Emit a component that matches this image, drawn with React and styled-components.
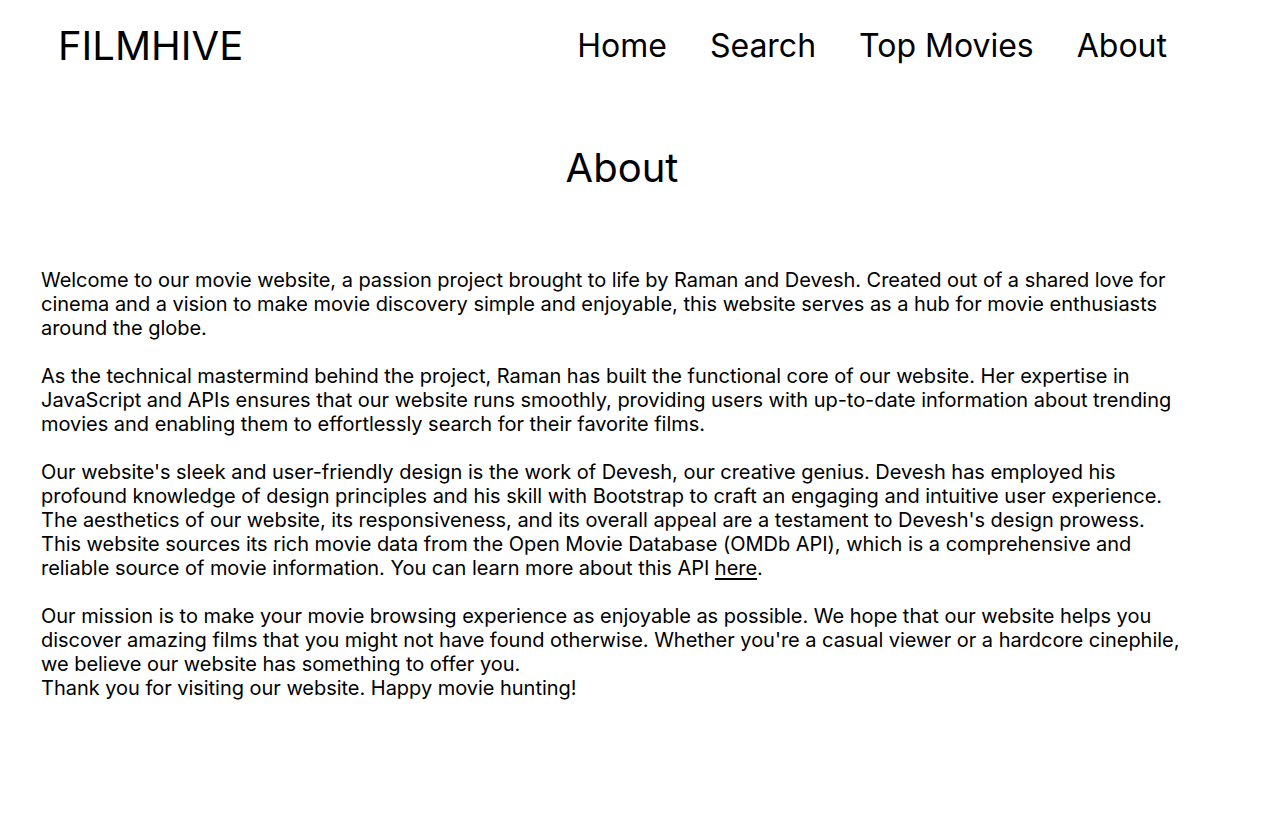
import React from 'react';
import styled, { createGlobalStyle } from 'styled-components';

const GlobalStyle = createGlobalStyle`
  body {
    margin: 0;
    background: #fff;
    color: #000;
  }
`;

const Header = styled.header`
  display: flex;
  justify-content: space-between;
  align-items: flex-start;
  padding: 19px 113px 0 58px;
`;

const Logo = styled.div`
  font-family: Inter, sans-serif;
  font-size: 40px;
  line-height: 54px;
`;

const Nav = styled.nav`
  display: flex;
  gap: 43px;
  margin-top: 8px;
`;

const NavLink = styled.a`
  font-family: Inter, sans-serif;
  font-size: 32px;
  line-height: 37px;
  color: #000;
  text-decoration: none;
`;

const Title = styled.h1`
  margin: 68px 0 0;
  font-family: Inter, sans-serif;
  font-size: 40px;
  font-weight: 400;
  line-height: 54px;
  text-align: center;
  width: 1244px;
`;

const Content = styled.section`
  width: 1162px;
  margin: 73px 0 0 41px;
  font-family: Inter, sans-serif;
  font-size: 20px;
  line-height: 24px;
  letter-spacing: -0.03px;
`;

const Para = styled.p`
  margin: 0 0 ${(p) => (p.$tight ? '0' : '24px')};
`;

const Link = styled.a`
  color: #000;
  text-decoration: underline;
  text-underline-offset: 3px;
`;

export default function App() {
  return (
    <>
      <GlobalStyle />
      <Header>
        <Logo>FILMHIVE</Logo>
        <Nav>
          <NavLink href="#">Home</NavLink>
          <NavLink href="#">Search</NavLink>
          <NavLink href="#">Top Movies</NavLink>
          <NavLink href="#">About</NavLink>
        </Nav>
      </Header>
      <Title>About</Title>
      <Content>
        <Para>
          Welcome to our movie website, a passion project brought to life by Raman and Devesh. Created out of a shared love for cinema and a vision to make movie discovery simple and enjoyable, this website serves as a hub for movie enthusiasts around the globe.
        </Para>
        <Para>
          As the technical mastermind behind the project, Raman has built the functional core of our website. Her expertise in JavaScript and APIs ensures that our website runs smoothly, providing users with up-to-date information about trending movies and enabling them to effortlessly search for their favorite films.
        </Para>
        <Para $tight>
          Our website's sleek and user-friendly design is the work of Devesh, our creative genius. Devesh has employed his profound knowledge of design principles and his skill with Bootstrap to craft an engaging and intuitive user experience. The aesthetics of our website, its responsiveness, and its overall appeal are a testament to Devesh's design prowess.
        </Para>
        <Para>
          This website sources its rich movie data from the Open Movie Database (OMDb API), which is a comprehensive and reliable source of movie information. You can learn more about this API <Link href="#">here</Link>.
        </Para>
        <Para $tight>
          Our mission is to make your movie browsing experience as enjoyable as possible. We hope that our website helps you discover amazing films that you might not have found otherwise. Whether you're a casual viewer or a hardcore cinephile, we believe our website has something to offer you.
        </Para>
        <Para $tight>Thank you for visiting our website. Happy movie hunting!</Para>
      </Content>
    </>
  );
}
